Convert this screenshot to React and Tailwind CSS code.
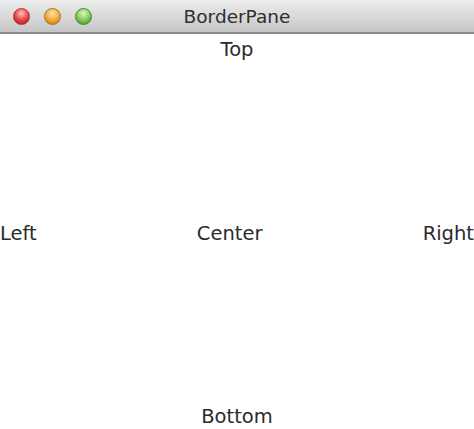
export default function App() {
  const font = { fontFamily: '"DejaVu Sans", "Liberation Sans", sans-serif' };
  return (
    <div className="w-[474px] h-[429px] bg-white flex flex-col overflow-hidden" style={font}>
      {/* title bar */}
      <div className="relative h-[34px] shrink-0 flex items-center justify-center bg-gradient-to-b from-[#ededed] to-[#c6c6c6] border-b-2 border-[#8a8a8a]">
        <div className="absolute left-[13px] top-[8px] flex gap-[14px]">
          <span className="w-[17px] h-[17px] rounded-full border border-[#a83535] bg-[radial-gradient(circle_at_50%_30%,#ffc0c0,#e63c3c_55%,#9e1818)]" />
          <span className="w-[17px] h-[17px] rounded-full border border-[#a8741c] bg-[radial-gradient(circle_at_50%_30%,#ffe6a8,#f0a732_55%,#b06c18)]" />
          <span className="w-[17px] h-[17px] rounded-full border border-[#4a8a30] bg-[radial-gradient(circle_at_50%_30%,#dcf8bf,#7ec651_55%,#3c8623)]" />
        </div>
        <span className="text-[18.5px] text-[#2e2e33] pt-[1px]">BorderPane</span>
      </div>
      {/* border pane */}
      <div className="flex-1 flex flex-col text-[19.5px] text-[#2b2b2b]">
        <div className="h-[28px] flex items-center justify-center pt-[3px]">Top</div>
        <div className="flex-1 flex items-center justify-between">
          <span>Left</span>
          <span>Center</span>
          <span>Right</span>
        </div>
        <div className="h-[24px] flex items-center justify-center">Bottom</div>
      </div>
    </div>
  );
}
